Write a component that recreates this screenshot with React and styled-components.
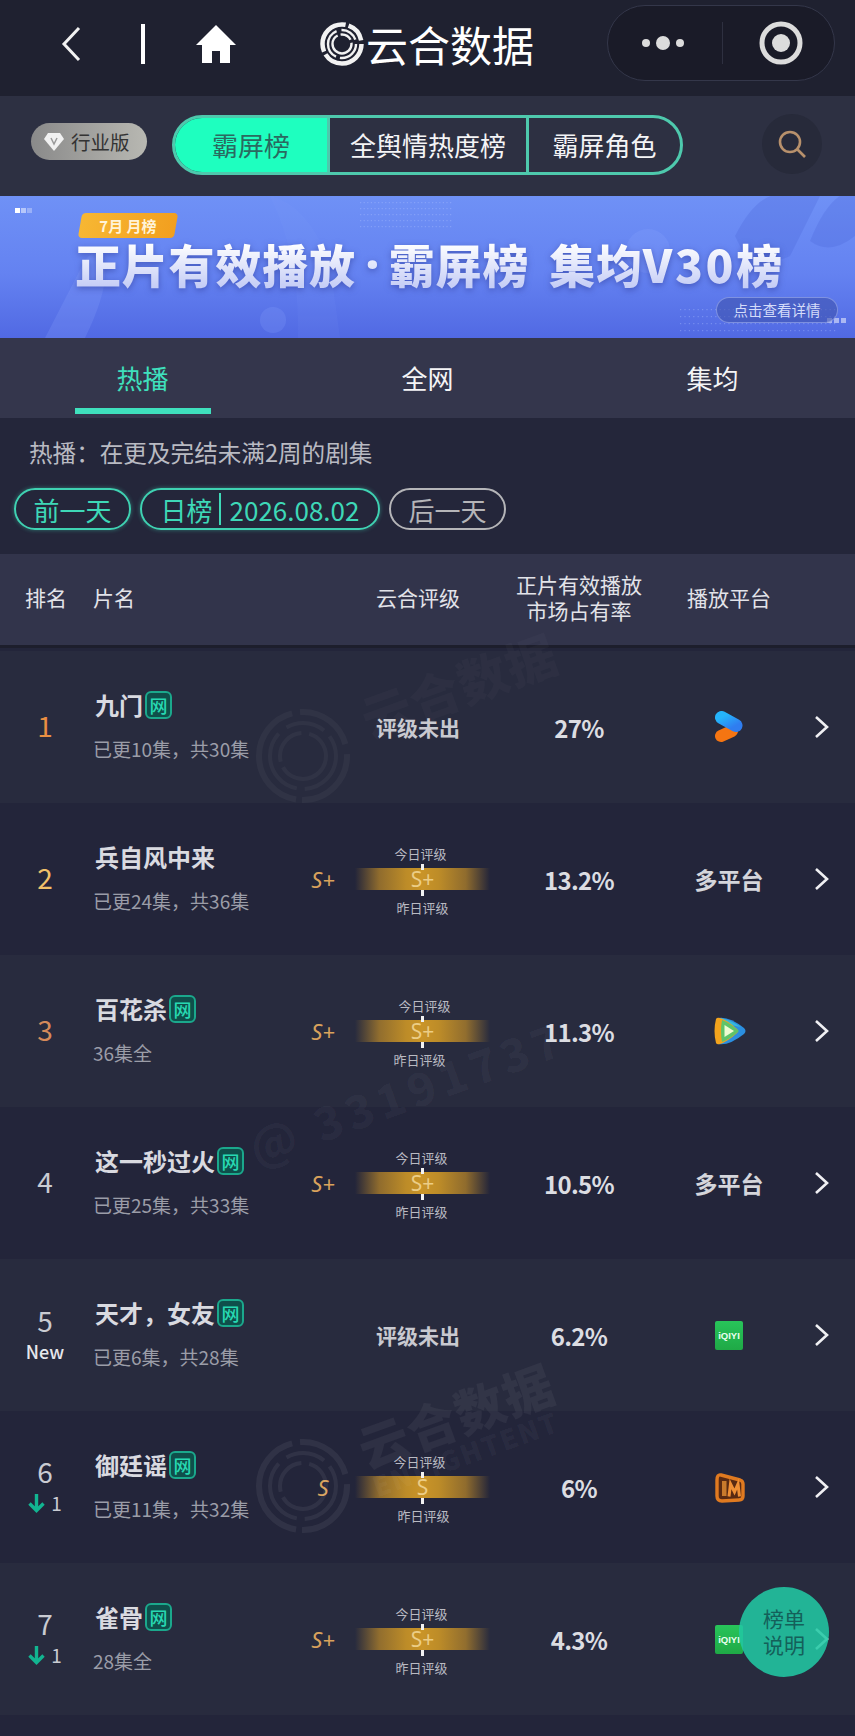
import React from 'react';
import styled, { createGlobalStyle } from 'styled-components';

const GlobalStyle = createGlobalStyle`
    html, body {
        margin: 0;
        padding: 0;
        background: #1f2130;
    }
    * {
        box-sizing: border-box;
    }
    body {
        font-family: "Noto Sans CJK SC", "Noto Sans", sans-serif;
    }
`;

const Page = styled.div`
    position: relative;
    width: 855px;
    height: 1736px;
    overflow: hidden;
    background: #23253a;
`;

/* top mini-program bar */
const NavBar = styled.div`
    display: flex;
    align-items: center;
    height: 96px;
    padding: 0 20px 8px 61px;
    background: #1f2130;
`;

const BackIcon = styled.svg`
    width: 20px;
    height: 36px;
`;

const NavDivider = styled.div`
    width: 4px;
    height: 40px;
    margin-left: 60px;
    background: #fff;
`;

const HomeIcon = styled.svg`
    width: 40px;
    height: 38px;
    margin-left: 51px;
`;

const BrandLogo = styled.svg`
    width: 44px;
    height: 44px;
    margin-left: 84px;
`;

const BrandName = styled.div`
    margin-left: 2px;
    color: #fff;
    font-size: 42px;
    line-height: 50px;
`;

const Capsule = styled.div`
    display: flex;
    align-items: center;
    width: 228px;
    height: 76px;
    margin-left: auto;
    margin-top: -3px;
    padding-left: 34px;
    border: 1px solid #34374a;
    border-radius: 38px;
    background: #1a1b28;
`;

const Dots = styled.div`
    display: flex;
    align-items: center;
    gap: 6px;
    width: 80px;
`;

const Dot = styled.span`
    display: block;
    width: ${({ $big }) => ($big ? 14 : 8)}px;
    height: ${({ $big }) => ($big ? 14 : 8)}px;
    border-radius: 50%;
    background: #dcdcdc;
`;

const CapsuleLine = styled.div`
    width: 1px;
    height: 42px;
    background: #2e3040;
`;

const TargetIcon = styled.svg`
    width: 46px;
    height: 46px;
    margin-left: 35px;
`;

/* board switcher */
const BoardBar = styled.div`
    display: flex;
    align-items: center;
    height: 100px;
    padding: 0 33px 0 31px;
    background: #2d3042;
`;

const EditionBadge = styled.div`
    display: flex;
    align-items: center;
    gap: 6px;
    width: 116px;
    height: 37px;
    margin-top: -9px;
    padding-left: 12px;
    border-radius: 19px;
    background: linear-gradient(90deg, #8a8a8a, #b8b8b2);
    color: #333;
    font-size: 19.5px;
    white-space: nowrap;
`;

const DiamondIcon = styled.svg`
    width: 22px;
    height: 20px;
    flex: none;
`;

const Segments = styled.div`
    display: flex;
    width: 511px;
    height: 60px;
    margin-top: -2px;
    margin-left: 25px;
    overflow: hidden;
    border: 3px solid #4ec9ad;
    border-radius: 30px;
`;

const Segment = styled.div`
    display: flex;
    align-items: center;
    justify-content: center;
    width: ${({ $width }) => $width}px;
    padding-bottom: 2px;
    border-left: ${({ $first }) => ($first ? '0' : '3px solid #4ec9ad')};
    background: ${({ $active }) => ($active ? '#1effbf' : 'transparent')};
    color: ${({ $active }) => ($active ? '#2a6a60' : '#f4f4f6')};
    font-size: 26px;
`;

const SearchButton = styled.div`
    display: flex;
    align-items: center;
    justify-content: center;
    width: 60px;
    height: 60px;
    margin-left: auto;
    margin-top: -4px;
    border-radius: 50%;
    background: #272a3a;
`;

/* promo banner */
const Banner = styled.div`
    position: relative;
    height: 142px;
    overflow: hidden;
    background: linear-gradient(180deg, #6f91f6 0%, #6482f1 55%, #5169e3 100%);
`;

const BannerArt = styled.svg`
    position: absolute;
    inset: 0;
    width: 855px;
    height: 142px;
`;

const MonthTag = styled.div`
    position: absolute;
    left: 80px;
    top: 17px;
    width: 96px;
    height: 25px;
    transform: skewX(-10deg);
    border-radius: 4px;
    background: linear-gradient(90deg, #f7b733, #f29f1f);
`;

const MonthText = styled.div`
    transform: skewX(10deg);
    color: #fff3d8;
    font-size: 15px;
    font-weight: 700;
    line-height: 25px;
    text-align: center;
`;

const BannerTitle = styled.div`
    position: absolute;
    left: 75px;
    top: 34px;
    display: flex;
    background: linear-gradient(180deg, #ffffff 20%, #c6cef6 85%);
    background-clip: text;
    -webkit-background-clip: text;
    color: transparent;
    filter: drop-shadow(0 2px 3px rgba(40, 50, 140, 0.5));
    font-size: 46px;
    font-weight: 900;
    line-height: 66px;
    letter-spacing: 0.8px;
    white-space: nowrap;
`;

const TitleDot = styled.span`
    width: 33px;
    text-align: center;
    font-family: "Noto Sans", sans-serif;
    letter-spacing: 0;
`;

const TitleEnd = styled.span`
    margin-left: 20px;
`;

const TitleLatin = styled.span`
    letter-spacing: 2.6px;
`;

const DetailButton = styled.div`
    position: absolute;
    left: 716px;
    top: 101px;
    width: 122px;
    height: 26px;
    border: 1px solid rgba(190, 205, 255, 0.45);
    border-radius: 13px;
    background: rgba(60, 80, 170, 0.55);
    color: #d4dcfa;
    font-size: 14.5px;
    line-height: 24px;
    text-align: center;
`;

/* hot / all / average tabs */
const TabBar = styled.div`
    display: grid;
    grid-template-columns: repeat(3, 285px);
    height: 80px;
    background: #34364c;
`;

const Tab = styled.div`
    position: relative;
    padding-top: 19px;
    color: ${({ $active }) => ($active ? '#3fe0bd' : '#f4f4f6')};
    font-size: 26px;
    line-height: 42px;
    text-align: center;

    ${({ $active }) => $active && `
        &::after {
            content: '';
            position: absolute;
            left: 75px;
            bottom: 4px;
            width: 136px;
            height: 6px;
            background: #3fe0bd;
        }
    `}
`;

const DescSection = styled.div`
    height: 136px;
    padding: 17px 14px 0;
    background: #24263a;
`;

const DescText = styled.div`
    padding-left: 15px;
    color: #b9bac2;
    font-size: 23.6px;
    line-height: 34px;
`;

const PillRow = styled.div`
    display: flex;
    gap: 9px;
    margin-top: 19px;
`;

const Pill = styled.div`
    display: flex;
    align-items: center;
    justify-content: center;
    width: ${({ $width }) => $width}px;
    height: 42px;
    border: 2px solid ${({ $muted }) => ($muted ? '#b5b5b8' : '#3fd2b2')};
    border-radius: 21px;
    box-shadow: ${({ $muted }) => ($muted ? 'none' : '0 0 4px rgba(63, 210, 178, 0.45)')};
    color: ${({ $muted }) => ($muted ? '#b5b5b8' : '#3ed8b7')};
    font-size: 26px;
    white-space: nowrap;
`;

const PillLine = styled.span`
    width: 2px;
    height: 32px;
    margin: 0 9px 0 6px;
    background: #3ed8b7;
`;

/* table */
const COLUMNS = '90px 214px 196px 158px 142px 55px';

const TableHead = styled.div`
    display: grid;
    grid-template-columns: ${COLUMNS};
    align-items: center;
    height: 94px;
    margin-bottom: 3px;
    padding-bottom: 6px;
    border-bottom: 3px solid #1d1e2c;
    background: #32344b;
    color: #e2e3e9;
    font-size: 21px;
    line-height: 26px;
`;

const HeadRank = styled.div`
    padding-left: 25px;
`;

const HeadName = styled.div`
    padding-left: 3px;
`;

const HeadRating = styled.div`
    padding-left: 72px;
`;

const HeadCenter = styled.div`
    text-align: center;
`;

const Row = styled.div`
    display: grid;
    grid-template-columns: ${COLUMNS};
    align-items: center;
    height: 152px;
    background: ${({ $odd }) => ($odd ? '#282b3e' : '#23253a')};
`;

const RankCell = styled.div`
    display: flex;
    flex-direction: column;
    align-items: center;
    margin-bottom: 5px;
`;

const RankNumber = styled.div`
    color: ${({ $color }) => $color};
    font-size: 28px;
    line-height: 34px;
`;

const RankNew = styled.div`
    margin-top: 2px;
    color: #e6e7ec;
    font-size: 18px;
    font-weight: 500;
    line-height: 24px;
`;

const RankChange = styled.div`
    display: flex;
    align-items: center;
    gap: 6px;
    margin-top: 3px;
    color: #c9cbd2;
    font-size: 19px;
    line-height: 24px;
`;

const NameCell = styled.div`
    margin-bottom: 4px;
    padding-left: 4px;
`;

const NameLine = styled.div`
    display: flex;
    align-items: center;
    gap: 2px;
    height: 32px;
    padding-left: 1px;
    color: #d9dae0;
    font-size: 24px;
    font-weight: 700;
`;

const NetBadge = styled.span`
    display: flex;
    align-items: center;
    justify-content: center;
    width: 27px;
    height: 28px;
    border: 2.5px solid #1ba88c;
    border-radius: 6px;
    background: #0f4f4b;
    color: #27d9b2;
    font-size: 18px;
    font-weight: 500;
    line-height: 1;
`;

const EpisodeLine = styled.div`
    margin-top: 15px;
    margin-left: -1px;
    color: #9b9da8;
    font-size: 19px;
    line-height: 26px;
`;

const RatingCell = styled.div`
    display: flex;
    align-items: center;
`;

const NoRating = styled.div`
    padding-left: 72px;
    color: #c8c9d0;
    font-size: 21px;
    font-weight: 700;
`;

const RatingDelta = styled.div`
    width: 38px;
    margin-right: 13px;
    color: #d9a25c;
    font-family: "Noto Sans", sans-serif;
    font-size: 22px;
    font-style: italic;
    text-align: center;
`;

const RatingStack = styled.div`
    display: flex;
    flex-direction: column;
    align-items: center;
    width: 135px;
    margin-top: 4px;
`;

const RatingLabel = styled.div`
    transform: translateX(${({ $shift }) => $shift}px);
    color: #b9bac2;
    font-size: 13px;
    line-height: 18px;
`;

const RatingBand = styled.div`
    position: relative;
    width: 135px;
    height: 22px;
    margin: 5px 0 9px;
    background: linear-gradient(90deg, rgba(190, 138, 40, 0) 0%, rgba(190, 138, 40, 0.7) 18%, #bd8c28 38%, #c99428 50%, #bd8c28 62%, rgba(190, 138, 40, 0.7) 82%, rgba(190, 138, 40, 0) 100%);
    color: #eccd86;
    font-family: "Noto Sans", sans-serif;
    font-size: 21px;
    line-height: 22px;
    text-align: center;

    &::before,
    &::after {
        content: '';
        position: absolute;
        left: 66px;
        width: 2.5px;
        height: 6px;
        background: #f2f2f2;
    }
    &::before {
        top: -4px;
    }
    &::after {
        bottom: -6px;
    }
`;

const ShareCell = styled.div`
    color: #dcdde2;
    font-size: 24px;
    font-weight: 700;
    text-align: center;
    letter-spacing: -0.7px;
`;

const PlatformCell = styled.div`
    display: flex;
    justify-content: center;
    color: #d4d5db;
    font-size: 23px;
    font-weight: 700;
`;

const IqiyiIcon = styled.div`
    display: flex;
    align-items: center;
    justify-content: center;
    width: 28px;
    height: 29px;
    border-radius: 2px;
    background: linear-gradient(180deg, #28c45a, #1fa946);
    color: #eafff0;
    font-family: "Liberation Sans", sans-serif;
    font-size: 9.5px;
    font-weight: 700;
`;

const ChevronIcon = styled.svg`
    width: 15px;
    height: 24px;
    margin-left: 14px;
`;

/* bits floating above the list */
const Watermark = styled.div`
    position: absolute;
    left: ${({ $x }) => $x}px;
    top: ${({ $y }) => $y}px;
    transform: rotate(-20deg);
    color: ${({ $alpha }) => `rgba(255, 255, 255, ${$alpha})`};
    font-weight: 900;
    white-space: nowrap;
    pointer-events: none;
`;

const MarkName = styled.div`
    font-size: 50px;
    line-height: 54px;
    letter-spacing: 1px;
`;

const MarkLatin = styled.div`
    font-size: 27px;
    line-height: 28px;
    letter-spacing: 2px;
`;

const MarkNumber = styled.div`
    font-size: 46px;
    letter-spacing: 5px;
`;

const MarkLogo = styled.svg`
    position: absolute;
    left: ${({ $x }) => $x}px;
    top: ${({ $y }) => $y}px;
    width: 96px;
    height: 96px;
    opacity: ${({ $alpha }) => $alpha};
`;

const HelpButton = styled.div`
    position: absolute;
    left: 739px;
    top: 1587px;
    display: flex;
    align-items: center;
    justify-content: center;
    width: 90px;
    height: 90px;
    padding-bottom: 2px;
    border-radius: 50%;
    background: rgba(33, 199, 163, 0.88);
    color: #14605a;
    font-size: 21px;
    line-height: 26px;
    text-align: center;
`;

const Rings = () => (
    <g fill="none" stroke="currentColor">
        <circle cx="48" cy="48" r="44" strokeWidth="6" strokeDasharray="70 6 120 8 60 10" />
        <circle cx="48" cy="48" r="33" strokeWidth="4" strokeDasharray="50 8 70 10 40 8" />
        <circle cx="48" cy="48" r="23" strokeWidth="4" strokeDasharray="60 6 40 8" />
    </g>
);

const YoukuIcon = () => (
    <svg width="28" height="32" viewBox="0 0 28 32">
        <defs>
            <linearGradient id="youkuBlue" x1="0" y1="0" x2="1" y2="1">
                <stop offset="0" stopColor="#25b4fb" />
                <stop offset="1" stopColor="#2f7df0" />
            </linearGradient>
        </defs>
        <path d="M6 25 L17 20" stroke="#f57512" strokeWidth="12" strokeLinecap="round" />
        <path d="M6.5 6.5 L21 14.5" stroke="url(#youkuBlue)" strokeWidth="13" strokeLinecap="round" />
    </svg>
);

const TencentIcon = () => (
    <svg width="33" height="30" viewBox="0 0 33 30">
        <path d="M5 2 Q3 15 5 28 Q16 30 31 18 Q34 15 31 12 Q16 0 5 2 Z" fill="#2b8fe0" />
        <path d="M7 2 Q16 3 28 11 L12 8 Z" fill="#35b8dc" />
        <path d="M3 3 Q0 15 3 27 Q4 29 7 28 Q14 26 24 17 Q26 15 24 13 Q14 4 7 2 Q4 1 3 3 Z" fill="#f2a31d" />
        <path d="M9 4 Q7 15 9 26 Q17 23 26 15 Q17 7 9 4 Z" fill="#5fc46a" />
        <path d="M11.5 9 V21 L21 15 Z" fill="#eefbd2" />
    </svg>
);

const MangoIcon = () => (
    <svg width="31" height="32" viewBox="0 0 31 32">
        <path d="M7 4 L26 9 Q29 10 29 13 V25 Q29 29 25 29 L8 30 Q3 30 3 25 V9 Q3 3 7 4 Z" fill="#5a2a12" stroke="#e07a20" strokeWidth="3.4" />
        <path d="M8 10 H12.5 V25 H8 Z" fill="#c97a2c" />
        <path d="M15 25.5 L16.5 13 L20.5 21 L24 13 L25.5 25.5" fill="none" stroke="#ef8f35" strokeWidth="3" />
    </svg>
);

const RATED = { today: -2, yesterday: 0 };

const rows = [
    { rank: 1, color: '#e98f43', name: '九门', net: true, episodes: '已更10集，共30集', share: '27%', platform: 'youku' },
    { rank: 2, color: '#f0c069', name: '兵自风中来', episodes: '已更24集，共36集', rating: 'S+', ...RATED, share: '13.2%', platform: 'multi' },
    { rank: 3, color: '#d68a5a', name: '百花杀', net: true, episodes: '36集全', rating: 'S+', today: 2, yesterday: -3, share: '11.3%', platform: 'tencent' },
    { rank: 4, color: '#c9cbd2', name: '这一秒过火', net: true, episodes: '已更25集，共33集', rating: 'S+', today: -1, yesterday: -1, share: '10.5%', platform: 'multi' },
    { rank: 5, color: '#c9cbd2', isNew: true, name: '天才，女友', net: true, episodes: '已更6集，共28集', share: '6.2%', platform: 'iqiyi' },
    { rank: 6, color: '#c9cbd2', drop: 1, name: '御廷谣', net: true, episodes: '已更11集，共32集', rating: 'S', today: -3, yesterday: 1, share: '6%', platform: 'mango' },
    { rank: 7, color: '#c9cbd2', drop: 1, name: '雀骨', net: true, episodes: '28集全', rating: 'S+', today: -1, yesterday: -1, share: '4.3%', platform: 'iqiyi' },
];

const Platform = ({ type }) => {
    if (type === 'youku') return <YoukuIcon />;
    if (type === 'tencent') return <TencentIcon />;
    if (type === 'mango') return <MangoIcon />;
    if (type === 'iqiyi') return <IqiyiIcon>iQIYI</IqiyiIcon>;
    return '多平台';
};

const DownArrow = () => (
    <svg width="17" height="20" viewBox="0 0 17 20">
        <path d="M8.5 1 V17 M1.5 10.5 L8.5 17.5 L15.5 10.5" fill="none" stroke="#12b591" strokeWidth="3.4" />
    </svg>
);

const ChartRow = ({ item, index }) => (
    <Row $odd={ index % 2 === 0 }>
        <RankCell>
            <RankNumber $color={ item.color }>{ item.rank }</RankNumber>
            { item.isNew && <RankNew>New</RankNew> }
            { item.drop && <RankChange><DownArrow />{ item.drop }</RankChange> }
        </RankCell>
        <NameCell>
            <NameLine>
                { item.name }
                { item.net && <NetBadge>网</NetBadge> }
            </NameLine>
            <EpisodeLine>{ item.episodes }</EpisodeLine>
        </NameCell>
        <RatingCell>
            { item.rating ? (
                <>
                    <RatingDelta>{ item.rating }</RatingDelta>
                    <RatingStack>
                        <RatingLabel $shift={ item.today }>今日评级</RatingLabel>
                        <RatingBand>{ item.rating }</RatingBand>
                        <RatingLabel $shift={ item.yesterday }>昨日评级</RatingLabel>
                    </RatingStack>
                </>
            ) : <NoRating>评级未出</NoRating> }
        </RatingCell>
        <ShareCell>{ item.share }</ShareCell>
        <PlatformCell><Platform type={ item.platform } /></PlatformCell>
        <ChevronIcon viewBox="0 0 15 24">
            <path d="M2 2 L13 12 L2 22" fill="none" stroke="#f0f0f3" strokeWidth="2.6" />
        </ChevronIcon>
    </Row>
);

const App = () => (
    <Page>
        <GlobalStyle />
        <NavBar>
            <BackIcon viewBox="0 0 20 36">
                <path d="M18 2 L3 18 L18 34" fill="none" stroke="#f2f2f2" strokeWidth="3" />
            </BackIcon>
            <NavDivider />
            <HomeIcon viewBox="0 0 40 38">
                <path d="M20 0 L40 20 H34 V38 H24 V26 H16 V38 H6 V20 H0 Z" fill="#fff" />
            </HomeIcon>
            <BrandLogo viewBox="0 0 44 44" fill="none" stroke="#f2f2f2">
                <circle cx="22" cy="22" r="19.5" strokeWidth="4.5" strokeDasharray="50 3 42 3 20 4" />
                <circle cx="22" cy="22" r="14" strokeWidth="2.4" strokeDasharray="24 4 32 5 18 5" />
                <circle cx="22" cy="22" r="9.5" strokeWidth="2.4" strokeDasharray="40 3 12 3" />
            </BrandLogo>
            <BrandName>云合数据</BrandName>
            <Capsule>
                <Dots><Dot /><Dot $big /><Dot /></Dots>
                <CapsuleLine />
                <TargetIcon viewBox="0 0 46 46">
                    <circle cx="23" cy="23" r="19" fill="none" stroke="#dcdcdc" strokeWidth="5" />
                    <circle cx="23" cy="23" r="9" fill="#dcdcdc" />
                </TargetIcon>
            </Capsule>
        </NavBar>

        <BoardBar>
            <EditionBadge>
                <DiamondIcon viewBox="0 0 22 20">
                    <path d="M5 1 H17 L21 7 L11 19 L1 7 Z" fill="#f1f1f1" />
                    <path d="M8 6 L11 12 L14 6" fill="none" stroke="#9a9a9a" strokeWidth="1.5" />
                </DiamondIcon>
                行业版
            </EditionBadge>
            <Segments>
                <Segment $first $active $width={ 152 }>霸屏榜</Segment>
                <Segment $width={ 199 }>全舆情热度榜</Segment>
                <Segment $width={ 154 }>霸屏角色</Segment>
            </Segments>
            <SearchButton>
                <svg width="30" height="30" viewBox="0 0 30 30" fill="none" stroke="#b8916c" strokeWidth="2.6">
                    <circle cx="13" cy="13" r="10" />
                    <path d="M20 20 L28 28" />
                </svg>
            </SearchButton>
        </BoardBar>

        <Banner>
            <BannerArt viewBox="0 0 855 142">
                <g fill="#8fa8ff" opacity="0.2">
                    <path d="M45 142 L82 70 Q95 45 105 70 Q108 95 85 142 Z" />
                    <path d="M735 40 Q760 -10 790 0 H820 L790 60 Q770 70 745 60 Z" fill="#3f58d0" />
                    <path d="M810 45 Q830 -5 855 -5 V40 Q830 60 810 45 Z" fill="#3f58d0" />
                    <circle cx="648" cy="55" r="22" />
                    <circle cx="273" cy="124" r="13" />
                    <path d="M270 0 Q310 10 330 70 L340 142 H298 Q300 60 270 0 Z" opacity="0.35" />
                </g>
                <g fill="#a9bdff" opacity="0.4">
                    { Array.from({ length: 5 }, (_, y) => Array.from({ length: 26 }, (_, x) => (
                        <rect key={ `t${x}-${y}` } x={ 360 + x * 3.6 } y={ 6 + y * 6 } width="1.2" height="1.2" />
                    ))) }
                    { Array.from({ length: 4 }, (_, y) => Array.from({ length: 36 }, (_, x) => (
                        <rect key={ `b${x}-${y}` } x={ 680 + x * 4.4 } y={ 113 + y * 7 } width="1.2" height="1.2" />
                    ))) }
                </g>
                <rect x="15" y="12" width="5" height="5" fill="#fff" />
                <rect x="21" y="12" width="5" height="5" fill="#fff" opacity="0.5" />
                <rect x="27" y="12" width="5" height="5" fill="#fff" opacity="0.3" />
                <rect x="827" y="122" width="5" height="5" fill="#fff" opacity="0.5" />
                <rect x="834" y="122" width="5" height="5" fill="#fff" opacity="0.5" />
                <rect x="841" y="122" width="5" height="5" fill="#fff" opacity="0.5" />
            </BannerArt>
            <MonthTag><MonthText>7月 月榜</MonthText></MonthTag>
            <BannerTitle>
                正片有效播放<TitleDot>·</TitleDot>霸屏榜<TitleEnd>集均<TitleLatin>V30</TitleLatin>榜</TitleEnd>
            </BannerTitle>
            <DetailButton>点击查看详情</DetailButton>
        </Banner>

        <TabBar>
            <Tab $active>热播</Tab>
            <Tab>全网</Tab>
            <Tab>集均</Tab>
        </TabBar>

        <DescSection>
            <DescText>热播：在更及完结未满2周的剧集</DescText>
            <PillRow>
                <Pill $width={ 117 }>前一天</Pill>
                <Pill $width={ 240 }>日榜<PillLine />2026.08.02</Pill>
                <Pill $width={ 117 } $muted>后一天</Pill>
            </PillRow>
        </DescSection>

        <TableHead>
            <HeadRank>排名</HeadRank>
            <HeadName>片名</HeadName>
            <HeadRating>云合评级</HeadRating>
            <HeadCenter>正片有效播放<br />市场占有率</HeadCenter>
            <HeadCenter>播放平台</HeadCenter>
        </TableHead>

        { rows.map((item, index) => <ChartRow key={ item.rank } item={ item } index={ index } />) }

        <MarkLogo $x={ 255 } $y={ 708 } $alpha={ 0.035 } viewBox="0 0 96 96" color="#fff"><Rings /></MarkLogo>
        <Watermark $x={ 361 } $y={ 656 } $alpha={ 0.025 }>
            <MarkName>云合数据</MarkName>
            <MarkLatin>ENLIGHTENT</MarkLatin>
        </Watermark>
        <Watermark $x={ 240 } $y={ 1058 } $alpha={ 0.03 }>
            <MarkNumber>@ 33191737</MarkNumber>
        </Watermark>
        <MarkLogo $x={ 255 } $y={ 1438 } $alpha={ 0.06 } viewBox="0 0 96 96" color="#fff"><Rings /></MarkLogo>
        <Watermark $x={ 358 } $y={ 1386 } $alpha={ 0.05 }>
            <MarkName>云合数据</MarkName>
            <MarkLatin>ENLIGHTENT</MarkLatin>
        </Watermark>

        <HelpButton>榜单<br />说明</HelpButton>
    </Page>
);

export default App;
